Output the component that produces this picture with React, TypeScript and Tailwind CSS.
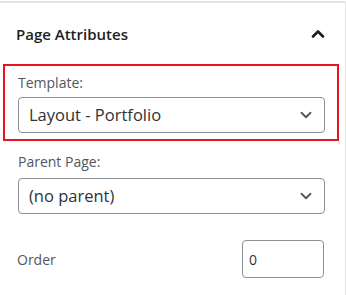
import { ChevronDown, ChevronUp } from 'lucide-react';

function SelectBox({ value }: { value: string }) {
  return (
    <div className="flex h-[36px] w-[307px] items-center justify-between rounded-[4px] border border-[#8c8f94] bg-white pl-[10px] pr-[9px]">
      <span className="text-[16.5px] text-[#2c3338]">{value}</span>
      <ChevronDown className="h-[18px] w-[18px] text-[#50575e]" strokeWidth={2.4} />
    </div>
  );
}

export default function App() {
  return (
    <div
      className="h-[295px] w-[346px] bg-white pt-px"
      style={{ fontFamily: '"Open Sans", "Noto Sans", Arial, sans-serif' }}
    >
      <div className="h-full border-r border-t-2 border-[#e2e4e7]">
        {/* header */}
        <div className="flex h-[61px] items-center justify-between pl-[16px] pr-[19px]">
          <h2 className="pt-[1px] text-[15px] font-semibold text-[#1e1e1e]">Page Attributes</h2>
          <ChevronUp className="mr-[-2px] h-[20px] w-[20px] text-[#1e1e1e]" strokeWidth={3.2} />
        </div>

        {/* template, highlighted */}
        <div className="ml-[3px] h-[77px] w-[336px] border-2 border-[#e8141f] pl-[13px] pt-[7px]">
          <div className="mb-[5px] text-[14px] leading-[19px] text-[#50575e]">Template:</div>
          <SelectBox value="Layout - Portfolio" />
        </div>

        {/* parent page */}
        <div className="pl-[18px] pt-[11px]">
          <div className="mb-[7px] text-[14px] leading-[19px] text-[#50575e]">Parent Page:</div>
          <SelectBox value="(no parent)" />
        </div>

        {/* order */}
        <div className="mt-[26px] flex items-center justify-between pl-[17px] pr-[21px]">
          <span className="text-[14px] text-[#50575e]">Order</span>
          <div className="flex h-[38px] w-[82px] items-center rounded-[4px] border border-[#8c8f94] pl-[6px] text-[14px] text-[#2c3338]">
            0
          </div>
        </div>
      </div>
    </div>
  );
}
